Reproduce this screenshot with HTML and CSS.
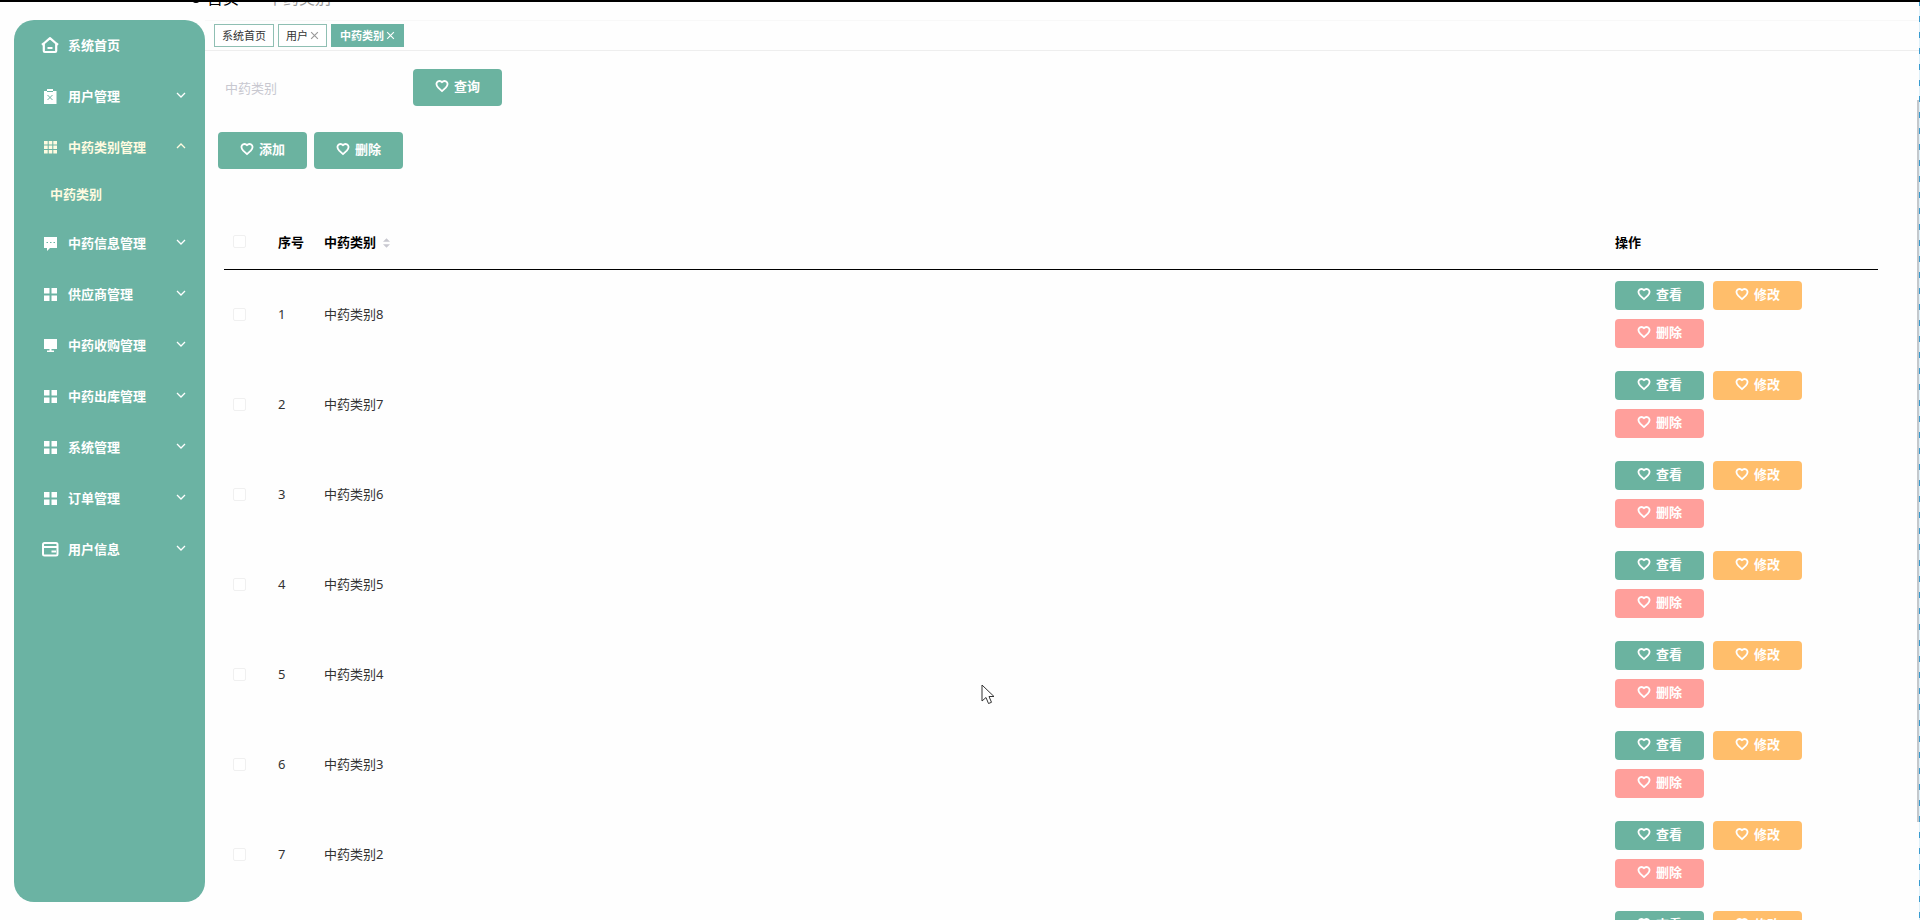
FILE: index.html
```html
<!DOCTYPE html>
<html lang="zh-CN">
<head>
    <meta charset="UTF-8">
    <meta name="viewport" content="width=device-width, initial-scale=1.0">
    <title>中药类别</title>
    <link rel="stylesheet" href="styles.css">
</head>
<body>
    <!-- Shared icons -->
    <svg class="sprite" aria-hidden="true">
        <symbol id="heart" viewBox="0 0 14 14"><path d="M7 3.300C5.800 1.500 3.200 1.600 2 3.200 .8 5.200 1.800 7.200 3.200 8.700L7 12.200l3.800-3.500C12.200 7.200 13.200 5.200 12 3.200 10.800 1.600 8.200 1.500 7 3.300z" fill="none" stroke="currentColor" stroke-width="1.800" stroke-linejoin="round"/></symbol>
        <symbol id="home" viewBox="0 0 18 18"><path d="M2.800 7.500 9 2.200l6.200 5.300V15a1 1 0 0 1-1 1H3.800a1 1 0 0 1-1-1zM1 8.800l1.800-1.500M15.200 7.300 17 8.800" fill="none" stroke="currentColor" stroke-width="2.200" stroke-linejoin="round"/><path d="M6.500 12h5" stroke="currentColor" stroke-width="2"/></symbol>
        <symbol id="clip" viewBox="0 0 18 18"><path d="M3 4h3V2h6v2h3.500v13H3z" fill="currentColor"/><path d="M6 4.500h6M6.500 8l5 5m0-5-5 5" stroke="#6bb3a3" stroke-width="1"/></symbol>
        <symbol id="nine" viewBox="0 0 18 18"><path d="M3 3h3.700v3.500H3zM7.700 3h3.600v3.500H7.700zM12.300 3H16v3.500h-3.700zM3 7.500h3.700V11H3zM7.700 7.500h3.600V11H7.700zM12.300 7.500H16V11h-3.700zM3 12h3.700v3.500H3zM7.700 12h3.600v3.500H7.700zM12.300 12H16v3.500h-3.700z" fill="currentColor"/></symbol>
        <symbol id="chat" viewBox="0 0 18 18"><path d="M3 3h13v11H9l-3 3v-3H3z" fill="currentColor"/><path d="M5.500 8.500h1.500m2 0h1.500m2 0H14" stroke="#6bb3a3" stroke-width="1"/></symbol>
        <symbol id="four" viewBox="0 0 18 18"><path d="M3 3h5.500v5.500H3zM10.500 3H16v5.500h-5.500zM3 10.500h5.500V16H3zM10.500 10.500H16V16h-5.500z" fill="currentColor"/></symbol>
        <symbol id="screen" viewBox="0 0 18 18"><path d="M3 3h13v10H3zM8.500 13h2v1.500H13V16H6v-1.500h2.500z" fill="currentColor"/></symbol>
        <symbol id="card" viewBox="0 0 18 18"><rect x="2" y="3" width="14.500" height="12.500" rx="1.500" fill="none" stroke="currentColor" stroke-width="2"/><path d="M2 7h14M10.500 11.500H15" stroke="currentColor" stroke-width="1.800"/></symbol>
        <symbol id="down" viewBox="0 0 10 10"><path d="m1 3 4 4 4-4" fill="none" stroke="currentColor" stroke-width="1.300"/></symbol>
        <symbol id="up" viewBox="0 0 10 10"><path d="m1 7 4-4 4 4" fill="none" stroke="currentColor" stroke-width="1.300"/></symbol>
        <symbol id="pin" viewBox="0 0 10 14"><circle cx="5" cy="8" r="3" fill="none" stroke="currentColor" stroke-width="2"/></symbol>
    </svg>

    <header class="topbar">
        <nav class="breadcrumb">
            <svg class="pin"><use href="#pin"/></svg>
            <a href="#">首页</a>
            <span class="separator">=</span>
            <span class="current">中药类别</span>
        </nav>
    </header>

    <div class="layout">
        <nav class="sidebar">
            <a class="menu-item" href="#"><svg class="menu-icon"><use href="#home"/></svg><span>系统首页</span></a>
            <a class="menu-item" href="#"><svg class="menu-icon"><use href="#clip"/></svg><span>用户管理</span><svg class="arrow"><use href="#down"/></svg></a>
            <a class="menu-item active" href="#"><svg class="menu-icon"><use href="#nine"/></svg><span>中药类别管理</span><svg class="arrow"><use href="#up"/></svg></a>
            <a class="submenu-item" href="#">中药类别</a>
            <a class="menu-item" href="#"><svg class="menu-icon"><use href="#chat"/></svg><span>中药信息管理</span><svg class="arrow"><use href="#down"/></svg></a>
            <a class="menu-item" href="#"><svg class="menu-icon"><use href="#four"/></svg><span>供应商管理</span><svg class="arrow"><use href="#down"/></svg></a>
            <a class="menu-item" href="#"><svg class="menu-icon"><use href="#screen"/></svg><span>中药收购管理</span><svg class="arrow"><use href="#down"/></svg></a>
            <a class="menu-item" href="#"><svg class="menu-icon"><use href="#four"/></svg><span>中药出库管理</span><svg class="arrow"><use href="#down"/></svg></a>
            <a class="menu-item" href="#"><svg class="menu-icon"><use href="#four"/></svg><span>系统管理</span><svg class="arrow"><use href="#down"/></svg></a>
            <a class="menu-item" href="#"><svg class="menu-icon"><use href="#four"/></svg><span>订单管理</span><svg class="arrow"><use href="#down"/></svg></a>
            <a class="menu-item" href="#"><svg class="menu-icon"><use href="#card"/></svg><span>用户信息</span><svg class="arrow"><use href="#down"/></svg></a>
        </nav>

        <main class="main">
            <div class="tabs">
                <button class="tab">系统首页</button>
                <button class="tab">用户<svg class="close" viewBox="0 0 8 8"><path d="m1 1 6 6m0-6-6 6"/></svg></button>
                <button class="tab active">中药类别<svg class="close" viewBox="0 0 8 8"><path d="m1 1 6 6m0-6-6 6"/></svg></button>
            </div>

            <form class="search">
                <input class="search-input" type="text" placeholder="中药类别" aria-label="中药类别">
                <button class="btn btn-large" type="button"><svg class="heart"><use href="#heart"/></svg>查询</button>
            </form>

            <div class="actions">
                <button class="btn btn-large"><svg class="heart"><use href="#heart"/></svg>添加</button>
                <button class="btn btn-large"><svg class="heart"><use href="#heart"/></svg>删除</button>
            </div>

            <table class="table">
                <thead>
                    <tr>
                        <th class="col-check"><input type="checkbox" aria-label="全选"></th>
                        <th class="col-index">序号</th>
                        <th>中药类别<svg class="sort" viewBox="0 0 8 12"><path d="M0 4.500 4 .5l4 4zM0 7.500l4 4 4-4z"/></svg></th>
                        <th class="col-action">操作</th>
                    </tr>
                </thead>
                <tbody id="rows"></tbody>
            </table>
        </main>
    </div>

    <div class="scroll-track"><div class="scroll-thumb"></div></div>
    <svg class="cursor" viewBox="0 0 14 22"><path d="M1 1v16l4-3.500 2.500 6 3-1.200L8 12.500h5z"/></svg>

    <script src="script.js"></script>
</body>
</html>
```

FILE: styles.css
```css
* {
    box-sizing: border-box;
}

body {
    margin: 0;
    height: 100vh;
    overflow: hidden;
    background: #fefefe;
    color: #333;
    font-family: "Noto Sans", "Noto Sans CJK SC", sans-serif;
    font-size: 13px;
    line-height: 20px;
}

a {
    color: inherit;
    text-decoration: none;
}

button,
input {
    font: inherit;
}

.sprite {
    display: none;
}

/* Top bar */
.topbar {
    height: 20px;
    border-top: 2px solid #000;
    overflow: hidden;
}

.breadcrumb {
    display: flex;
    align-items: center;
    height: 20px;
    margin-top: -14px;
    padding-left: 191px;
    font-size: 16px;
    color: #000;
}

.pin {
    width: 10px;
    height: 14px;
    margin-right: 6px;
}

.separator {
    width: 12px;
    margin: 0 8px;
    color: #c0c4cc;
}

.current {
    color: #999;
}

/* Layout */
.layout {
    display: flex;
    height: calc(100vh - 20px);
}

.sidebar {
    flex: 0 0 191px;
    margin: 0 0 18px 14px;
    border-radius: 20px;
    background: #6bb3a3;
    color: #fff;
    font-weight: bold;
}

.menu-item {
    display: flex;
    align-items: center;
    height: 51px;
    padding: 0 19px 2px 27px;
}

.menu-icon {
    width: 18px;
    height: 18px;
    margin-right: 9px;
}

.arrow {
    width: 10px;
    height: 10px;
    margin-left: auto;
    margin-bottom: 2px;
}

.submenu-item {
    display: block;
    height: 45px;
    padding-left: 36px;
    line-height: 43px;
}

.menu-item.active,
.submenu-item {
    color: #fffbe0;
}

.main {
    flex: 1;
    min-width: 0;
}

/* Tabs */
.tabs {
    display: flex;
    gap: 4px;
    padding: 3px 9px;
    border-top: 1px solid #f8f8f8;
    border-bottom: 1px solid #eee;
}

.tab {
    display: flex;
    align-items: center;
    gap: 2px;
    height: 23px;
    padding: 0 7px;
    border: 1px solid #8fbfb3;
    background: #fff;
    color: #333;
    font-size: 11px;
}

.tab.active {
    padding: 0 8px;
    border-color: #6bb3a3;
    background: #6bb3a3;
    color: #fff;
    font-weight: bold;
}

.close {
    width: 9px;
    height: 9px;
    fill: none;
    stroke: #999;
    stroke-width: 1;
}

.active .close {
    stroke: #fff;
}

/* Search and actions */
.search {
    display: flex;
    align-items: center;
    gap: 8px;
    padding: 18px 13px 0;
}

.search-input {
    width: 187px;
    height: 37px;
    padding: 0 7px;
    border: none;
    background: transparent;
}

.search-input::placeholder {
    color: #c8c8d0;
}

.actions {
    display: flex;
    gap: 7px;
    padding: 26px 13px 0;
}

.btn {
    display: inline-flex;
    align-items: center;
    justify-content: center;
    gap: 5px;
    width: 89px;
    height: 29px;
    padding: 0 0 3px;
    border: none;
    border-radius: 4px;
    background: #6bb3a0;
    color: #fff;
    font-weight: bold;
    cursor: pointer;
}

.btn-large {
    height: 37px;
}

.btn-edit {
    background: #ffbe6b;
}

.btn-delete {
    background: #ff9f9b;
}

.heart {
    width: 14px;
    height: 14px;
}

/* Table */
.table {
    width: calc(100% - 61px);
    margin: 46px 0 0 19px;
    border-collapse: collapse;
    table-layout: fixed;
}

.table th {
    height: 54px;
    padding: 0;
    border-bottom: 1px solid #000;
    color: #000;
    text-align: left;
}

.table td {
    height: 90px;
    padding: 0;
}

.col-check {
    width: 54px;
}

.col-index {
    width: 46px;
}

.col-action {
    width: 263px;
}

.table input {
    display: block;
    appearance: none;
    width: 13px;
    height: 13px;
    margin: 0 0 0 9px;
    border: 1px solid #f0f0f0;
    border-radius: 2px;
    background: #fff;
}

.sort {
    width: 7px;
    height: 12px;
    margin-left: 7px;
    vertical-align: -2px;
    fill: #c8c8d0;
}

.row-buttons {
    display: flex;
    flex-wrap: wrap;
    gap: 9px;
    width: 200px;
}

/* Page edge */
.scroll-track {
    position: absolute;
    top: 0;
    right: 0;
    bottom: 0;
    width: 3px;
    padding-top: 98px;
    border-top: 2px solid #000;
}

.scroll-track::after {
    content: "";
    position: absolute;
    top: 0;
    right: 0;
    bottom: 0;
    width: 1px;
    background: repeating-linear-gradient(#3a9cd0 0 4px, #dff1fa 4px 6px, #dff1fa 6px 14px, #3a9cd0 14px 16px);
}

.scroll-thumb {
    height: 88%;
    background: #c4c8cc;
}

.cursor {
    position: absolute;
    left: 51%;
    top: 684px;
    width: 18px;
    height: 22px;
    fill: #fff;
    stroke: #333;
}
```

FILE: script.js
```js
const names = ['中药类别8', '中药类别7', '中药类别6', '中药类别5', '中药类别4', '中药类别3', '中药类别2', '中药类别1'];

function button(text, type) {
    return `<button class="btn ${type}"><svg class="heart"><use href="#heart"/></svg>${text}</button>`;
}

document.getElementById('rows').innerHTML = names.map((name, i) => `
    <tr>
        <td><input type="checkbox" aria-label="${name}"></td>
        <td>${i + 1}</td>
        <td>${name}</td>
        <td><div class="row-buttons">
            ${button('查看', 'btn-view')}${button('修改', 'btn-edit')}${button('删除', 'btn-delete')}
        </div></td>
    </tr>`).join('');
```
